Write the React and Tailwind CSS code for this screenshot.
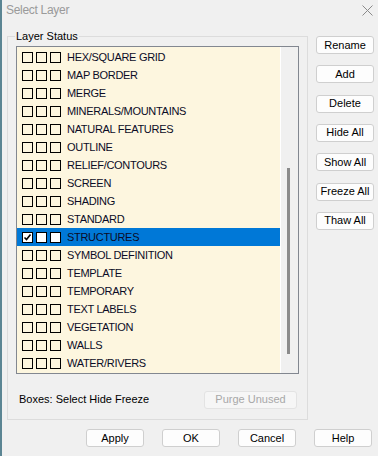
import React from "react";

const layers = [
  "HEX/SQUARE GRID",
  "MAP BORDER",
  "MERGE",
  "MINERALS/MOUNTAINS",
  "NATURAL FEATURES",
  "OUTLINE",
  "RELIEF/CONTOURS",
  "SCREEN",
  "SHADING",
  "STANDARD",
  "STRUCTURES",
  "SYMBOL DEFINITION",
  "TEMPLATE",
  "TEMPORARY",
  "TEXT LABELS",
  "VEGETATION",
  "WALLS",
  "WATER/RIVERS",
];

const sideButtons = ["Rename", "Add", "Delete", "Hide All", "Show All", "Freeze All", "Thaw All"];
const footerButtons = ["Apply", "OK", "Cancel", "Help"];

function Box({ checked, selected }) {
  return (
    <div
      className={`w-[11px] h-[11px] border border-black flex items-center justify-center ${
        selected ? "bg-white" : ""
      }`}
    >
      {checked && (
        <svg width="9" height="9" viewBox="0 0 9 9">
          <path d="M1.5 4.5 L3.5 6.5 L7.5 1.5" fill="none" stroke="black" strokeWidth="1.6" />
        </svg>
      )}
    </div>
  );
}

function Button({ children, disabled, className = "" }) {
  return (
    <div
      className={`h-[18px] rounded-[3px] border flex items-center justify-center leading-none ${
        disabled
          ? "bg-[#f6f6f6] border-[#e3e3e3] text-[#a8a8a8]"
          : "bg-[#fdfdfd] border-[#cfcfcf] text-black"
      } ${className}`}
    >
      {children}
    </div>
  );
}

export default function App() {
  return (
    <div className="flex w-[378px] h-[456px] overflow-hidden bg-[#f0f0f0] font-['Liberation_Sans',Arial,sans-serif] text-[11px] text-black">
      {/* window edge behind */}
      <div className="w-[2px] bg-[#5b8593]" />

      <div className="flex-1 flex flex-col">
        {/* TITLE */}
        <div className="h-[20px] flex items-center justify-between pl-[4px] pr-[5px]">
          <span className="text-[12px] tracking-[-0.3px] text-[#9a9a9a]">Select Layer</span>
          <svg width="11" height="11" viewBox="0 0 11 11">
            <path d="M0.5 0.5 L10.5 10.5 M10.5 0.5 L0.5 10.5" stroke="#8a8a8a" strokeWidth="1" />
          </svg>
        </div>

        {/* BODY */}
        <div className="flex mt-[9px] pl-[5px] gap-[8px]">
          <fieldset className="w-[299px] border border-[#dcdcdc] p-0 m-0">
            <legend className="ml-[7px] px-[1px] leading-[14px]">Layer Status</legend>
            <div className="px-[8px] pb-[11px]">
              <div className="mt-[3px] w-[283px] h-[328px] border border-[#828790] flex">
                <div className="w-[263px] bg-[#fdf6df] pt-[1px]">
                  {layers.map((name) => {
                    const selected = name === "STRUCTURES";
                    return (
                      <div
                        key={name}
                        className={`h-[18px] flex items-center pl-[5px] ${selected ? "bg-[#0078d7]" : ""}`}
                      >
                        <div className="flex gap-[3px]">
                          <Box checked={selected} selected={selected} />
                          <Box selected={selected} />
                          <Box selected={selected} />
                        </div>
                        <span className="ml-[6px] tracking-[-0.3px] text-[#0b0b26]">{name}</span>
                      </div>
                    );
                  })}
                </div>
                <div className="flex-1 bg-[#f0f0f0] border-l border-white pt-[121px] pl-[6px]">
                  <div className="w-[3px] h-[186px] bg-[#8b8b8b]" />
                </div>
              </div>

              <div className="mt-[17px] h-[17px] flex items-center justify-between pl-[3px] pr-[2px]">
                <span>Boxes: Select Hide Freeze</span>
                <Button disabled className="w-[93px] h-[17px]">
                  Purge Unused
                </Button>
              </div>
            </div>
          </fieldset>

          <div className="w-[58px] pt-[7px]">
            <div className="h-[194px] flex flex-col justify-between">
              {sideButtons.map((b) => (
                <Button key={b}>{b}</Button>
              ))}
            </div>
          </div>
        </div>

        {/* FOOTER */}
        <div className="mt-[9px] flex justify-end gap-[18px] pr-[6px]">
          {footerButtons.map((b) => (
            <Button key={b} className="w-[58px]">
              {b}
            </Button>
          ))}
        </div>
      </div>
    </div>
  );
}
